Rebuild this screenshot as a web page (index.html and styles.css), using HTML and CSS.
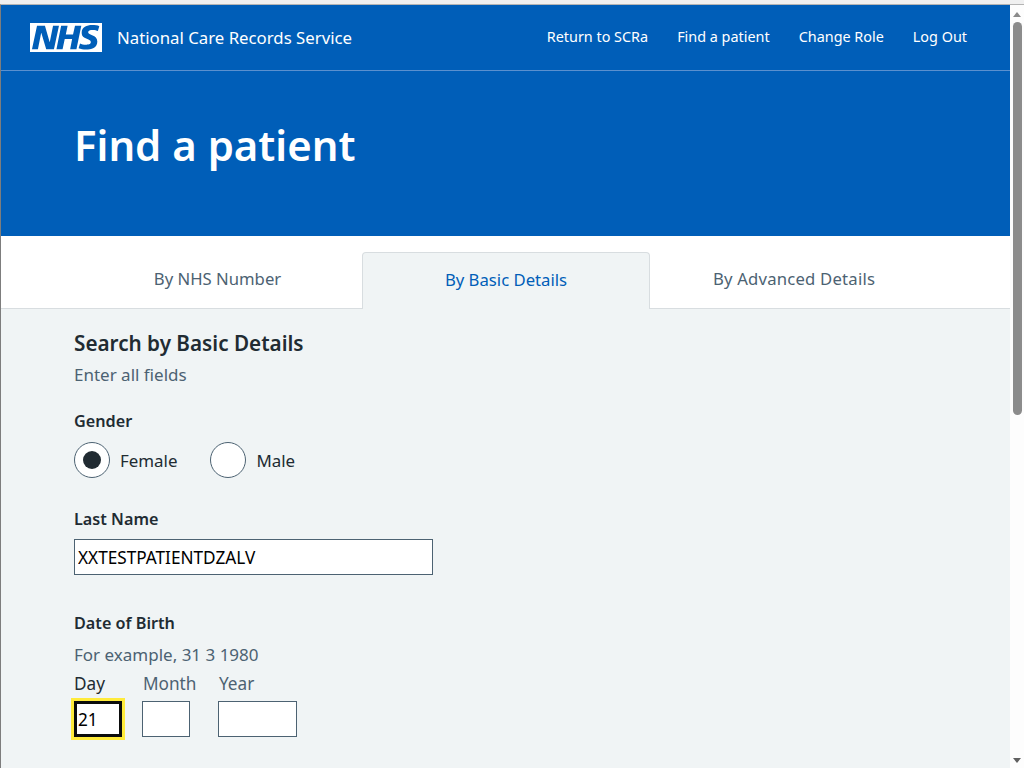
FILE: index.html
```html
<!DOCTYPE html>
<html lang="en">
<head>
<meta charset="utf-8">
<title>Find a patient</title>
<link rel="stylesheet" href="styles.css">
</head>
<body>
<div class="window">
  <div class="page">
    <header class="masthead">
      <div class="topbar">
        <a class="brand" href="#">
          <svg class="logo" viewBox="0 0 40 16" aria-label="NHS"><path fill="#fff" d="M0 0h40v16H0z"/><path fill="#005eb8" d="M3.9 1.5h4.4l2.6 9h.1l1.8-9h3.3l-2.8 13H9l-2.7-9h-.1l-1.8 9H1.1M17.3 1.5h3.6l-1 4.9h4L25 1.5h3.5l-2.7 13h-3.5l1.1-5.6h-4.1l-1.2 5.6h-3.4M37.7 4.4c-.7-.3-1.6-.6-2.9-.6-1.4 0-2.5.2-2.5 1.3 0 1.8 5.1 1.2 5.1 5.1 0 3.6-3.3 4.5-6.4 4.5-1.3 0-2.9-.3-4-.7l.8-2.7c.7.4 2.1.7 3.2.7s2.8-.2 2.8-1.5c0-2.1-5.1-1.3-5.1-5 0-3.4 2.9-4.4 5.8-4.4 1.6 0 3.1.2 4 .6"/></svg>
          <span class="service">National Care Records Service</span>
        </a>
        <nav class="topnav">
          <a href="#">Return to SCRa</a>
          <a href="#">Find a patient</a>
          <a href="#">Change Role</a>
          <a href="#">Log Out</a>
        </nav>
      </div>
      <h1 class="hero">Find a patient</h1>
    </header>
    <div class="tabs">
      <a class="tab" href="#">By NHS Number</a>
      <a class="tab active" href="#">By Basic Details</a>
      <a class="tab advanced" href="#">By Advanced Details</a>
    </div>
    <main class="panel">
      <h2 class="title">Search by Basic Details</h2>
      <p class="hint first">Enter all fields</p>
      <div class="label gender-label">Gender</div>
      <div class="radios">
        <label class="radio"><span class="dot checked"></span><span class="radio-text">Female</span></label>
        <label class="radio"><span class="dot"></span><span class="radio-text">Male</span></label>
      </div>
      <label class="label lastname-label" for="ln">Last Name</label>
      <input class="input lastname" id="ln" value="XXTESTPATIENTDZALV">
      <div class="label dob-label">Date of Birth</div>
      <p class="hint example">For example, 31 3 1980</p>
      <div class="dates">
        <div class="date"><span class="part day-label">Day</span><input class="input day focus" value="21"></div>
        <div class="date month-col"><span class="part inset">Month</span><input class="input month"></div>
        <div class="date"><span class="part inset">Year</span><input class="input year"></div>
      </div>
    </main>
  </div>
  <div class="scrollbar">
    <span class="arrow up"></span>
    <span class="thumb"></span>
    <span class="arrow down"></span>
  </div>
</div>
</body>
</html>
```
FILE: styles.css
```css
* { box-sizing: border-box; }
html, body { margin: 0; height: 100%; overflow: hidden; background: #fff; }
body { font-family: "Noto Sans", "Open Sans", sans-serif; color: #212b32; border-top: 4px solid #f0f0f0; }
a { text-decoration: none; color: inherit; }
.window { display: flex; height: 764px; border-top: 1px solid #b4b4b4; border-left: 1px solid #7d7d7d; }
.page { width: 1009px; flex: none; overflow: hidden; }
.masthead { background: #005eb8; color: #fff; height: 231px; }
.topbar { height: 66px; border-bottom: 1px solid #5a90cf; display: flex; align-items: center; justify-content: space-between; padding: 0 43px 2px 29px; }
.brand { display: flex; align-items: center; gap: 15px; margin-top: 2px; }
.logo { width: 72px; height: 29px; display: block; }
.service { font-size: 16.8px; }
.topnav { display: flex; gap: 29px; font-size: 14.4px; }
.hero { margin: 0; padding: 46px 0 0 73px; font-size: 41.9px; line-height: 56px; font-weight: 600; }
.tabs { display: grid; grid-template-columns: 361px 288px 1fr; height: 73px; padding-top: 16px; border-bottom: 1px solid #d8dde0; }
.tab { display: flex; align-items: center; justify-content: center; font-size: 16.7px; color: #4c6272; padding-bottom: 4px; }
.tab:first-child { padding-left: 72px; }
.tab:last-child { padding-right: 72px; }
.advanced { letter-spacing: 0.2px; }
.tab.active { background: #f0f4f5; color: #005eb8; border: 1px solid #d8dde0; border-bottom: 0; border-radius: 4px 4px 0 0; height: 57px; position: relative; z-index: 1; padding-bottom: 3px; }
.panel { background: #f0f4f5; height: 460px; padding: 20px 0 0 73px; }
.title { margin: 0; font-size: 20.7px; line-height: 28px; font-weight: 600; }
.hint { margin: 0; font-size: 17px; line-height: 24px; color: #4c6272; }
.first { margin-top: 6px; }
.label { display: block; font-size: 16.2px; line-height: 22px; font-weight: 600; }
.gender-label { margin-top: 23px; }
.radios { display: flex; gap: 33px; margin-top: 10px; height: 36px; }
.radio { display: flex; align-items: center; gap: 10px; font-size: 16.9px; line-height: 24px; }
.radio-text { padding-top: 2px; }
.dot { width: 36px; height: 36px; border-radius: 50%; border: 1px solid #4c6272; background: #fff; display: flex; align-items: center; justify-content: center; }
.dot.checked::after { content: ""; width: 18px; height: 18px; border-radius: 50%; background: #212b32; }
.lastname-label { margin-top: 30px; }
.input { display: block; height: 36px; border: 1px solid #4c6272; background: #fff; font: 17.2px "Noto Sans", sans-serif; color: #000; padding: 0 3px; border-radius: 0; outline: 0; }
.lastname { width: 359px; margin-top: 9px; }
.dob-label { margin-top: 37px; }
.example { margin-top: 9px; }
.dates { display: flex; gap: 20px; margin-top: 5px; }
.date { display: flex; flex-direction: column; gap: 5px; }
.month-col { width: 56px; }
.part { font-size: 17.2px; line-height: 24px; color: #4c6272; white-space: nowrap; }
.inset { padding-left: 1px; }
.day-label { color: #212b32; }
.day { width: 48px; }
.focus { border: 3px solid #0b0c0c; box-shadow: 0 0 0 3px #ffeb3b; padding: 0 1px; }
.month { width: 48px; }
.year { width: 79px; }
.scrollbar { flex: 1; background: #fdfdfd; display: flex; flex-direction: column; align-items: center; padding-top: 7px; }
.arrow { width: 0; height: 0; border-left: 4px solid transparent; border-right: 4px solid transparent; }
.up { border-bottom: 5px solid #8a8a8a; }
.down { border-top: 5px solid #606060; margin-top: 343px; }
.thumb { width: 9px; height: 393px; margin: 5px 0 0 1px; background: #8c8c8c; border-radius: 5px; }
```
